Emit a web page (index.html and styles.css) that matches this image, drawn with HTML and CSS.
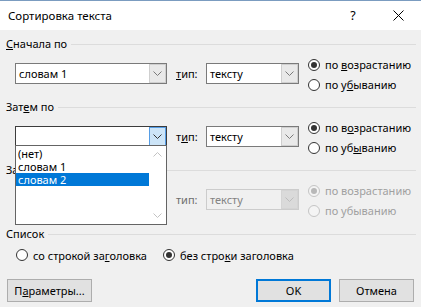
FILE: index.html
```html
<!DOCTYPE html>
<html lang="ru">
<head>
<meta charset="utf-8">
<title>Сортировка текста</title>
<link rel="stylesheet" href="styles.css">
</head>
<body>
<div class="window">
  <div class="titlebar">
    <span class="title">Сортировка текста</span>
    <span class="tb-btn help">?</span>
    <span class="tb-btn close">
      <svg width="11" height="11" viewBox="0 0 11 11"><path d="M0.5 0.5 L10.5 10.5 M10.5 0.5 L0.5 10.5" stroke="#000" stroke-width="1" fill="none"/></svg>
    </span>
  </div>
  <div class="content">
    <section class="group">
      <div class="group-head"><span><u>С</u>начала по</span><span class="rule"></span></div>
      <div class="sort-row">
        <div class="combo wide"><span class="combo-text">словам 1</span><span class="combo-btn"><svg width="9" height="5" viewBox="0 0 9 5"><polyline points="0.5,0.5 4.5,4.5 8.5,0.5" fill="none" stroke="#7a7a7a"/></svg></span></div>
        <span class="type-label"><u>т</u>ип:</span>
        <div class="combo narrow"><span class="combo-text">тексту</span><span class="combo-btn"><svg width="9" height="5" viewBox="0 0 9 5"><polyline points="0.5,0.5 4.5,4.5 8.5,0.5" fill="none" stroke="#7a7a7a"/></svg></span></div>
        <div class="radios">
          <div class="radio checked"><span class="circle"></span><span class="rl">по <u>в</u>озрастанию</span></div>
          <div class="radio"><span class="circle"></span><span class="rl">по у<u>б</u>ыванию</span></div>
        </div>
      </div>
    </section>
    <section class="group">
      <div class="group-head"><span>Зат<u>е</u>м по</span><span class="rule"></span></div>
      <div class="sort-row">
        <div class="combo wide open"><span class="combo-text"></span><span class="combo-btn"><svg width="9" height="5" viewBox="0 0 9 5"><polyline points="0.5,0.5 4.5,4.5 8.5,0.5" fill="none" stroke="#333"/></svg></span>
          <div class="dropdown">
            <ul class="options">
              <li>(нет)</li>
              <li>словам 1</li>
              <li class="selected">словам 2</li>
            </ul>
            <div class="scrollbar">
              <svg width="9" height="5" viewBox="0 0 9 5"><polyline points="0.5,4.5 4.5,0.5 8.5,4.5" fill="none" stroke="#c2c2c2"/></svg>
              <svg width="9" height="5" viewBox="0 0 9 5"><polyline points="0.5,0.5 4.5,4.5 8.5,0.5" fill="none" stroke="#c2c2c2"/></svg>
            </div>
          </div>
        </div>
        <span class="type-label">т<u>и</u>п:</span>
        <div class="combo narrow"><span class="combo-text">тексту</span><span class="combo-btn"><svg width="9" height="5" viewBox="0 0 9 5"><polyline points="0.5,0.5 4.5,4.5 8.5,0.5" fill="none" stroke="#7a7a7a"/></svg></span></div>
        <div class="radios">
          <div class="radio checked"><span class="circle"></span><span class="rl">по в<u>о</u>зрастанию</span></div>
          <div class="radio"><span class="circle"></span><span class="rl">по уб<u>ы</u>ванию</span></div>
        </div>
      </div>
    </section>
    <section class="group disabled">
      <div class="group-head"><span>Затем по</span><span class="rule"></span></div>
      <div class="sort-row">
        <div class="combo wide"><span class="combo-text"></span><span class="combo-btn"><svg width="9" height="5" viewBox="0 0 9 5"><polyline points="0.5,0.5 4.5,4.5 8.5,0.5" fill="none" stroke="#bdbdbd"/></svg></span></div>
        <span class="type-label">тип:</span>
        <div class="combo narrow"><span class="combo-text">тексту</span><span class="combo-btn"><svg width="9" height="5" viewBox="0 0 9 5"><polyline points="0.5,0.5 4.5,4.5 8.5,0.5" fill="none" stroke="#bdbdbd"/></svg></span></div>
        <div class="radios">
          <div class="radio checked"><span class="circle"></span><span class="rl">по возрастанию</span></div>
          <div class="radio"><span class="circle"></span><span class="rl">по убыванию</span></div>
        </div>
      </div>
    </section>
    <section class="group list-group">
      <div class="group-head"><span>Список</span><span class="rule"></span></div>
      <div class="list-opts">
        <div class="radio first"><span class="circle"></span><span class="rl">со строкой за<u>г</u>оловка</span></div>
        <div class="radio checked"><span class="circle"></span><span class="rl">без стро<u>к</u>и заголовка</span></div>
      </div>
    </section>
    <div class="buttons">
      <button class="btn params">П<u>а</u>раметры...</button>
      <span class="spacer"></span>
      <button class="btn default">OK</button>
      <button class="btn">Отмена</button>
    </div>
  </div>
</div>
</body>
</html>
```
FILE: styles.css
```css
html, body {
  margin: 0;
  padding: 0;
}
body {
  width: 421px;
  height: 307px;
  overflow: hidden;
  background: #f0f0f0;
  font-family: "Noto Sans", "Liberation Sans", sans-serif;
  font-size: 11px;
  color: #000;
}
u {
  text-underline-offset: 1px;
}
.window {
  width: 421px;
  height: 307px;
}
.titlebar {
  height: 30px;
  box-sizing: border-box;
  background: #fff;
  border-top: 1px solid #7b9cc0;
  display: flex;
  align-items: center;
  padding-left: 8px;
}
.title {
  flex: 1;
  font-size: 11.5px;
}
.tb-btn {
  width: 46px;
  height: 29px;
  display: flex;
  align-items: center;
  justify-content: center;
}
.help {
  font-size: 12.5px;
}
.close {
  width: 45px;
}
.content {
  padding: 7px 5px 0 6px;
}
.group-head {
  display: flex;
  align-items: center;
  height: 14px;
  line-height: 14px;
}
.rule {
  flex: 1;
  height: 1px;
  background: #dcdcdc;
  margin-left: 4px;
}
.sort-row {
  display: flex;
  align-items: center;
  height: 21px;
  margin: 12px 0 16px 9px;
}
.disabled .sort-row {
  margin-bottom: 17px;
}
.combo {
  position: relative;
  height: 21px;
  box-sizing: border-box;
  border: 1px solid #7a7a7a;
  background: #fff;
  display: flex;
  align-items: center;
}
.combo.wide {
  width: 152px;
}
.combo.narrow {
  width: 93px;
}
.combo-text {
  flex: 1;
  padding-left: 3px;
  line-height: 19px;
  white-space: nowrap;
}
.combo-btn {
  width: 17px;
  height: 19px;
  box-sizing: border-box;
  border: 1px solid #cfcfcf;
  background: #e9e9e9;
  display: flex;
  align-items: center;
  justify-content: center;
}
.combo.open {
  border-color: #3c3c3c;
}
.combo.open .combo-btn {
  background: #cce4f7;
  border-color: #569de5;
}
.type-label {
  margin-left: 9px;
  width: 30px;
}
.radios {
  margin-left: 9px;
  margin-top: 2px;
  display: flex;
  flex-direction: column;
}
.radio {
  height: 20px;
  display: flex;
  align-items: center;
  white-space: nowrap;
}
.rl {
  white-space: nowrap;
}
.circle {
  width: 12px;
  height: 12px;
  box-sizing: border-box;
  border: 1px solid #333;
  border-radius: 50%;
  background: #fff;
  margin-right: 5px;
  display: flex;
  align-items: center;
  justify-content: center;
}
.radio.checked .circle::after {
  content: "";
  width: 6px;
  height: 6px;
  border-radius: 50%;
  background: #333;
}
.disabled .type-label {
  color: #6d6d6d;
}
.disabled .combo {
  border-color: #cccccc;
  background: #f0f0f0;
  color: #838383;
}
.disabled .combo-btn {
  border-color: #d4d4d4;
  background: #dadada;
}
.disabled .radio {
  color: #a0a0a0;
}
.disabled .circle {
  border-color: #c4c4c4;
  background: #f4f4f4;
}
.disabled .radio.checked .circle::after {
  background: #b8b8b8;
}
.dropdown {
  position: absolute;
  left: -1px;
  top: calc(100% - 1px);
  width: 152px;
  height: 80px;
  box-sizing: border-box;
  border: 1px solid #646464;
  background: #fff;
  display: flex;
  z-index: 5;
}
.options {
  list-style: none;
  margin: 0;
  padding: 1px 0 0 0;
  flex: 1;
}
.options li {
  height: 13px;
  line-height: 13px;
  padding-left: 2px;
  white-space: nowrap;
}
.options li.selected {
  background: #0078d7;
  color: #fff;
}
.scrollbar {
  width: 17px;
  display: flex;
  flex-direction: column;
  justify-content: space-between;
  align-items: center;
  padding: 6px 0 6px;
}
.list-opts {
  display: flex;
  height: 14px;
  align-items: center;
  margin: 7px 0 0 10px;
}
.list-opts .radio.first {
  width: 147px;
}
.buttons {
  display: flex;
  margin: 17px 2px 0 1px;
}
.spacer {
  flex: 1;
}
.btn {
  height: 23px;
  width: 75px;
  box-sizing: border-box;
  border: 1px solid #adadad;
  background: #e1e1e1;
  font-family: inherit;
  font-size: 11px;
  color: #000;
  padding: 0;
  margin: 0 0 0 8px;
}
.btn.params {
  width: 85px;
  margin-left: 0;
}
.btn.default {
  border-color: #0078d7;
  box-shadow: inset 0 0 0 1px #0078d7;
}
```
